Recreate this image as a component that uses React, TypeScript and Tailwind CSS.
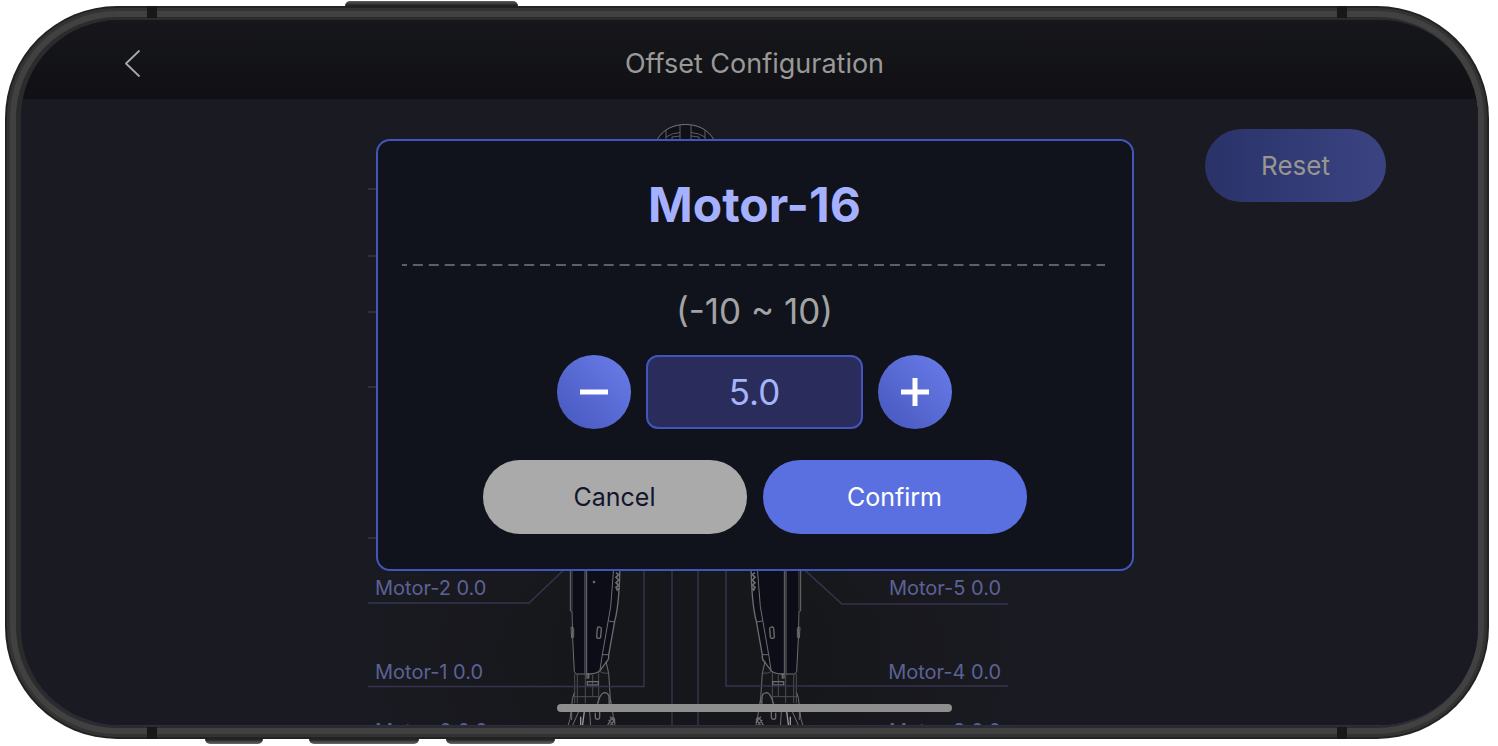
import React, { useState } from "react";

const LEFT_LABELS = [
  { name: "Motor-2", place: "top-[477px]" },
  { name: "Motor-1", place: "top-[561px]" },
  { name: "Motor-0", place: "top-[620px]" },
];

const RIGHT_LABELS = [
  { name: "Motor-5", place: "top-[477px]" },
  { name: "Motor-4", place: "top-[561px]" },
  { name: "Motor-3", place: "top-[620px]" },
];

function RobotLeg() {
  return (
    <g transform="translate(172 461) scale(0.3333)" fill="none" stroke="#6d6d6f" strokeWidth="3">
      <path
        d="M92 0 V152 L104 342 H150 Q170 340 178 334 L202 300 L224 184 Q239 120 240 0 Z"
        fill="#0c0d16"
        stroke="none"
      />
      {/* Shin */}
      <path d="M91 0 V153 H96 L98 235 L103 335 L108 342 H134" />
      <path d="M96 0 V150" stroke="#4a4a4d" />
      <path d="M135 0 V345 M140 0 V342" />
      <path d="M140 342 Q165 343 178 334 L200 305 Q207 300 206 285 L224 184 Q239 130 240 0" strokeWidth="4" />
      <path d="M223 0 L212 140 L186 290 L180 330" />
      <path d="M206 183 L224 186 M187 284 H206" />
      <path d="M93 202 h5 q3 0 3 4 v24 q0 4 -3 4 h-3 Z" />
      <rect x="171" y="201" width="12" height="34" rx="5" transform="rotate(5 177 218)" strokeWidth="4" />
      <path d="M228 38 l8 6 l-8 8 l8 8 l-8 8 l8 8 l-8 6 l4 8 l5 -6" strokeWidth="5" />
      {/* Ankle */}
      <path d="M104 342 V430 M112 345 V430 M136 345 V430 M158 345 V410 M176 336 V430" stroke="#4d4d50" />
      <path d="M100 410 H176" stroke="#4d4d50" />
      <path d="M178 334 Q190 341 206 340" stroke="#4d4d50" />
      <path d="M198 304 L206 340 L212 430" />
      <rect x="142" y="365" width="33" height="10" strokeWidth="4" />
      <rect x="141" y="343" width="5" height="11" strokeWidth="4" />
      {/* Foot */}
      <path d="M103 398 Q96 412 95 440 L90 478 L83 500 M95 450 V480" />
      <path d="M170 440 Q180 400 192 398 Q205 398 207 410 L208 440" strokeWidth="4" />
      <path d="M212 420 L220 470 L226 500" />
      <path d="M116 455 L96 500 M149 455 L152 500" />
      <path d="M133 455 L127 500 M122 470 V500" stroke="#9a9a9a" strokeWidth="4" />
      <path d="M166 458 V472 Q166 478 172 478 Q179 478 179 470 V455" strokeWidth="4" />
      <path d="M202 498 L214 476 L220 472 L224 480 L208 500 M206 480 L220 494 M210 470 L226 488" strokeWidth="4" />
    </g>
  );
}

function RobotFigure() {
  return (
    <svg className="absolute top-0 left-0" width="640" height="640" viewBox="0 0 640 640" aria-hidden="true">
      {/* Head */}
      <g fill="none" stroke="#5c5c5f" strokeWidth="1">
        <path d="M289 41 C295 30 306 25.5 317.5 25.5 S340 30 346 41 Z" fill="#101118" stroke="#77777a" />
        <path d="M312 26 V46 M323 26 V46 M298 31 V46 M337 31 V46" />
        <path d="M298 38 Q304 34 312 33.5 M323 33.5 Q331 34 337 38 M304 42 V38 L312 37 M331 42 V38 L323 37" />
      </g>

      <RobotLeg />
      <circle cx="226" cy="483" r="1.3" fill="#6d6d6f" />
      <g transform="translate(635 0) scale(-1 1)">
        <RobotLeg />
      </g>

      {/* Callout lines */}
      <g fill="none" stroke="#34344f" strokeWidth="1.5">
        <path d="M0 90 H60 M0 157 H60 M0 213 H60 M0 288 H60 M0 439 H60" />
        <path d="M0 504 H161 L202 465" />
        <path d="M0 587.5 H276 V460" />
        <path d="M304 460 V640 M330 460 V640" />
        <path d="M358 460 V587 H640" />
        <path d="M430 465 L474 505 H640" />
      </g>
    </svg>
  );
}

function Diagram() {
  return (
    <div className="relative w-[640px] shrink-0 text-xl leading-6 text-[#5b6296]">
      <RobotFigure />
      {LEFT_LABELS.map((label) => (
        <span key={label.name} className={`absolute left-[7px] whitespace-nowrap ${label.place}`}>
          {label.name} 0.0
        </span>
      ))}
      {RIGHT_LABELS.map((label) => (
        <span key={label.name} className={`absolute right-[7px] whitespace-nowrap ${label.place}`}>
          {label.name} 0.0
        </span>
      ))}
    </div>
  );
}

function OffsetDialog() {
  const [value, setValue] = useState("5.0");

  const step = (delta: number) => {
    const next = Math.min(10, Math.max(-10, (parseFloat(value) || 0) + delta));
    setValue(next.toFixed(1));
  };

  return (
    <div
      role="dialog"
      aria-labelledby="dialog-title"
      className="flex w-full max-w-[758px] flex-col items-center rounded-[14px] border-2 border-[#4355bd] bg-[#10131b] px-6 pt-9 pb-[35px]"
    >
      <h2 id="dialog-title" className="text-5xl leading-[56px] font-bold text-[#a5b1ff]">
        Motor-16
      </h2>

      <svg className="mt-[31px] h-0.5 w-full" aria-hidden="true">
        <line x1="0" y1="1" x2="703" y2="1" stroke="#5d5f68" strokeWidth="2" strokeDasharray="10 5.9" strokeDashoffset="5" />
      </svg>

      <label htmlFor="offset" className="mt-[23px] text-[35px] leading-[44px] text-[#a3a3a5]">
        (-10 ~ 10)
      </label>

      <div className="mt-[22px] flex items-center gap-[15px]">
        <button
          type="button"
          aria-label="Decrease"
          onClick={() => step(-0.5)}
          className="flex size-[74px] items-center justify-center rounded-full bg-linear-to-tr from-[#4657bd] to-[#6b7dea]"
        >
          <svg width="30" height="30" viewBox="0 0 30 30" stroke="#fff" strokeWidth="5">
            <path d="M1 15 H29" />
          </svg>
        </button>
        <input
          id="offset"
          type="text"
          inputMode="decimal"
          value={value}
          onChange={(e) => setValue(e.target.value)}
          className="h-[74px] w-[217px] rounded-xl border-2 border-[#4355bd] bg-[#2a2d5b] text-center text-[35px] text-[#a5b4fb] outline-none"
        />
        <button
          type="button"
          aria-label="Increase"
          onClick={() => step(0.5)}
          className="flex size-[74px] items-center justify-center rounded-full bg-linear-to-tr from-[#4657bd] to-[#6b7dea]"
        >
          <svg width="30" height="30" viewBox="0 0 30 30" stroke="#fff" strokeWidth="5">
            <path d="M1 15 H29 M15 1 V29" />
          </svg>
        </button>
      </div>

      <div className="mt-[31px] flex gap-4 text-[25px]">
        <button type="button" className="h-[74px] w-[264px] rounded-full bg-[#aaaaaa] pt-0.5 text-[#14152a]">
          Cancel
        </button>
        <button type="button" className="h-[74px] w-[264px] rounded-full bg-[#5b70e0] pt-0.5 text-white">
          Confirm
        </button>
      </div>
    </div>
  );
}

function SideKey({ className }: { className: string }) {
  return <div className={`h-[5px] bg-linear-to-b ${className}`} />;
}

export default function App() {
  return (
    <div className="flex min-h-screen flex-col overflow-hidden bg-white pt-px pr-[9px] pb-0.5 pl-[5px] font-['Inter',sans-serif]">
      <div className="flex pl-[340px]">
        <SideKey className="w-[173px] rounded-t-md from-[#5c5f5c] to-[#1d1d1d]" />
      </div>

      {/* Phone body, the metal rim is shaded in four rings */}
      <div className="relative flex flex-1 flex-col rounded-[112px] bg-[#222222] p-0.5">
        <div className="flex flex-1 flex-col rounded-[110px] bg-[#333333] p-[3px]">
          <div className="flex flex-1 flex-col rounded-[107px] bg-[#414141] p-1.5">
            <div className="flex flex-1 flex-col rounded-[101px] bg-[#2b2b2b] pt-[3px] pb-0.5 pl-[5px]">
              <div className="relative flex flex-1 flex-col overflow-hidden rounded-[98px] border-b border-[#2c2c48] bg-[#1a1a22] bg-[radial-gradient(ellipse_340px_230px_at_46%_90%,#16171a_30%,#1a1a22_100%)]">
                <header className="grid h-[79px] shrink-0 grid-cols-[1fr_auto_1fr] items-center bg-linear-to-b from-[#16161c] via-[#131418] to-[#111014] pt-2 pr-[94px] pl-[104px]">
                  <button type="button" aria-label="Back" className="flex size-8 items-center justify-start">
                    <svg width="15" height="27" viewBox="0 0 15 27" fill="none" stroke="#a8a8a8" strokeWidth="1.8">
                      <path d="M14 1 L1 13.5 L14 26" strokeLinecap="round" strokeLinejoin="round" />
                    </svg>
                  </button>
                  <h1 className="text-[27px] leading-8 text-[#9a9998]">Offset Configuration</h1>
                </header>

                <main className="flex flex-1">
                  <div className="flex-[347_1_0]" />
                  <Diagram />
                  <div className="flex flex-[378_1_0] items-start justify-end pt-[30px] pr-[92px]">
                    <button
                      type="button"
                      className="h-[73px] w-[181px] rounded-full bg-linear-to-r from-[#2a3269] to-[#3b4482] text-[26px] text-[#979690]"
                    >
                      Reset
                    </button>
                  </div>
                </main>

                <div className="absolute inset-0 flex items-center justify-center pb-9 pl-2.5">
                  <OffsetDialog />
                </div>

                {/* Home indicator */}
                <div className="absolute inset-x-0 bottom-[13px] flex justify-center pl-2.5">
                  <div className="h-2 w-[395px] rounded-full bg-[#8e8e8e]" />
                </div>
              </div>
            </div>
          </div>
        </div>

        {/* Antenna bands */}
        <div className="absolute top-0 left-[142px] h-3 w-2.5 bg-[#181818]" />
        <div className="absolute top-0 right-[142px] h-3 w-2.5 bg-[#181818]" />
        <div className="absolute bottom-0 left-[142px] h-3 w-2.5 bg-[#181818]" />
        <div className="absolute right-[142px] bottom-0 h-3 w-2.5 bg-[#181818]" />
      </div>

      <div className="flex pl-[200px]">
        <SideKey className="mr-[46px] w-[58px] rounded-b-md from-[#1d1d1d] to-[#6a6c68]" />
        <SideKey className="mr-[27px] w-[110px] rounded-b-md from-[#1d1d1d] to-[#6a6c68]" />
        <SideKey className="w-[109px] rounded-b-md from-[#1d1d1d] to-[#6a6c68]" />
      </div>
    </div>
  );
}
